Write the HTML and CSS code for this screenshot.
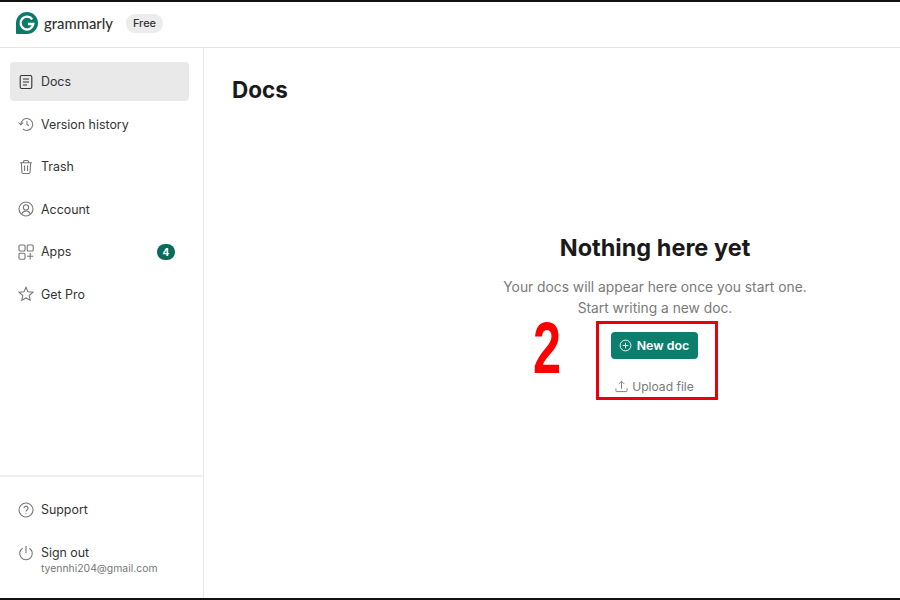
FILE: index.html
```html
<!DOCTYPE html>
<html lang="en">
<head>
<meta charset="utf-8">
<title>Grammarly Docs</title>
<link rel="stylesheet" href="styles.css">
</head>
<body>
<div class="app">
  <header class="topbar">
    <svg class="logo" viewBox="0 0 22 22" width="22" height="22" aria-hidden="true">
      <path d="M11 0a11 11 0 1 1 0 22H1.200a1 1 0 0 1-1.200-1V11A11 11 0 0 1 11 0z" fill="#0b7a67"/>
      <path d="M16.200 7.400A6.400 6.400 0 1 0 17.300 12h-5.400" fill="none" stroke="#fff" stroke-width="2.300"/>
    </svg>
    <span class="brand">grammarly</span>
    <span class="plan">Free</span>
  </header>
  <div class="body">
    <aside class="sidebar">
      <nav class="nav">
        <a class="item active">
          <svg class="icon dark" viewBox="0 0 16 16"><rect x="2.200" y="1.500" width="11.600" height="13" rx="1.500"/><path d="M5 5h6M5 8h6M5 11h4"/></svg>
          <span>Docs</span>
        </a>
        <a class="item">
          <svg class="icon" viewBox="0 0 17 16"><path d="M3 8.500a6.300 6.300 0 1 1 2.100 4.700"/><path d="M.6 6.400l2.400 2.400 2.500-2.300M9.500 4.800v3.600l2.300 1.400"/></svg>
          <span>Version history</span>
        </a>
        <a class="item">
          <svg class="icon" viewBox="0 0 16 16"><path d="M2 3.800h12M5.500 3.600V2.800a1.300 1.300 0 0 1 1.300-1.300h2.400a1.300 1.300 0 0 1 1.300 1.300v.8M3.400 3.800l.5 9.500a1.300 1.300 0 0 0 1.300 1.200h5.600a1.300 1.300 0 0 0 1.300-1.200l.5-9.500M6.500 6.500v5.500M9.500 6.500v5.500"/></svg>
          <span>Trash</span>
        </a>
        <a class="item">
          <svg class="icon" viewBox="0 0 16 16"><circle cx="8" cy="8" r="7"/><circle cx="8" cy="6.400" r="2.600"/><path d="M3.600 13c.8-2 2.400-3 4.400-3s3.600 1 4.400 3"/></svg>
          <span>Account</span>
        </a>
        <a class="item">
          <svg class="icon" viewBox="0 0 16 16"><rect x="1" y="1" width="6" height="6" rx="1"/><rect x="9.200" y="1" width="6" height="6" rx="1"/><rect x="1" y="9.200" width="6" height="6" rx="1"/><path d="M12.200 9v6.400M9 12.200h6.400"/></svg>
          <span>Apps</span>
          <span class="badge">4</span>
        </a>
        <a class="item">
          <svg class="icon" viewBox="0 0 16 16"><path d="M8 1.300l2 4.500 4.800.5-3.600 3.200 1 4.800L8 12l-4.200 2.300 1-4.800L1.200 6.300 6 5.800z"/></svg>
          <span>Get Pro</span>
        </a>
      </nav>
      <div class="footer">
        <a class="item">
          <svg class="icon" viewBox="0 0 16 16"><circle cx="8" cy="8" r="7"/><path d="M6 6.200a2 2 0 1 1 3 1.700c-.7.400-1 .8-1 1.600M8 11.300v.8"/></svg>
          <span>Support</span>
        </a>
        <a class="item signout">
          <svg class="icon" viewBox="0 0 16 16"><path d="M8 1v7M4.600 3.200a6.300 6.300 0 1 0 6.800 0"/></svg>
          <span class="stack"><span>Sign out</span><small class="email">tyennhi204@gmail.com</small></span>
        </a>
      </div>
    </aside>
    <main class="main">
      <h1 class="title">Docs</h1>
      <section class="empty">
        <h2 class="empty-title">Nothing here yet</h2>
        <p class="empty-text">Your docs will appear here once you start one.<br>Start writing a new doc.</p>
        <div class="actions">
          <span class="step">2</span>
          <div class="highlight">
            <button class="new-doc">
              <svg class="btn-icon" viewBox="0 0 14 14"><circle cx="7" cy="7" r="5.800"/><path d="M7 4v6M4 7h6"/></svg>
              New doc
            </button>
            <a class="upload">
              <svg class="up-icon" viewBox="0 0 14 14"><path d="M7 9.500V1.500M4 4.300l3-3 3 3M1 9v2.700c0 .5.400.8.800.8h10.400c.4 0 .8-.3.800-.8V9"/></svg>
              Upload file
            </a>
          </div>
        </div>
      </section>
    </main>
  </div>
</div>
</body>
</html>
```
FILE: styles.css
```css
* { box-sizing: border-box; }
html, body { margin: 0; height: 100%; }
body { background: #fff; font-family: Inter, "Liberation Sans", sans-serif; color: #2b2b2b; }
.app {
  width: 900px; height: 600px; display: flex; flex-direction: column;
  border-top: 2px solid #111; border-bottom: 2px solid #111;
}
.topbar {
  height: 46px; flex: none; display: flex; align-items: center;
  padding: 0 0 3px 16px; border-bottom: 1px solid #e6e6e6;
}
.logo { flex: none; }
.brand { margin-left: 6px; margin-top: -1px; font-family: Lato, Inter, sans-serif; font-size: 14.800px; font-weight: 500; color: #333; }
.plan {
  margin-left: 13.500px; padding: 0 6.500px; height: 19px; line-height: 19px; border-radius: 9px;
  background: #ececec; font-size: 11px; font-weight: 500; color: #333;
}
.body { flex: 1; display: flex; min-height: 0; }
.sidebar {
  width: 204px; flex: none; border-right: 1px solid #e6e6e6;
  display: flex; flex-direction: column; justify-content: space-between;
}
.nav { padding: 14px 14px 0 10px; display: flex; flex-direction: column; gap: 3.500px; }
.item {
  height: 39px; display: flex; align-items: center; gap: 7px;
  padding: 0 14px 0 8px; border-radius: 4px; font-size: 12.400px; color: #333;
}
.active { background: #e9e9e9; }
.icon {
  width: 16px; height: 16px; flex: none; fill: none; stroke: #777; stroke-width: 1.100;
}
.icon.dark { stroke: #333; }
.badge {
  margin-left: auto; width: 18px; height: 16px; border-radius: 8px; background: #0b6b5b;
  color: #fff; font-size: 10px; font-weight: 700; display: flex; align-items: center; justify-content: center;
}
.footer {
  border-top: 2px solid #efefef; padding: 13px 14px 16px 10px;
  display: flex; flex-direction: column; gap: 7px;
}
.signout { align-items: flex-start; padding-top: 9px; height: 46px; }
.stack { display: flex; flex-direction: column; gap: 2px; }
.email { font-size: 10.400px; color: #777; }
.main { flex: 1; padding: 27px 0 0 28px; min-width: 0; }
.title { margin: 0; font-size: 22.500px; line-height: 30px; font-weight: 700; color: #1a1a1a; }
.empty { margin: 128px 0 0 248px; width: 350px; display: flex; flex-direction: column; align-items: center; }
.empty-title { margin: 0; font-size: 23.500px; line-height: 30px; font-weight: 700; color: #1a1a1a; }
.empty-text { margin: 14px 0 0; font-size: 13.800px; line-height: 21px; color: #7a7a7a; text-align: center; }
.actions { display: flex; align-items: flex-start; margin-left: -58px; margin-top: 2px; }
.step {
  width: 62px; margin-left: -1px; margin-right: 1px; font-family: "Liberation Sans", sans-serif; font-size: 72px; line-height: 54px;
  font-weight: 700; color: #f00; text-align: left; transform: scaleX(.7); transform-origin: left center;
}
.highlight {
  width: 122px; height: 79px; border: 3px solid #e8000c;
  display: flex; flex-direction: column; align-items: center; padding: 8px 6px 0 0;
}
.new-doc {
  width: 87px; height: 27px; border: 0; border-radius: 4px; background: #0b7f6c; color: #fff;
  font: 600 12.400px Inter, sans-serif; display: flex; align-items: center; justify-content: center; gap: 5px; padding: 0;
}
.btn-icon { width: 13px; height: 13px; fill: none; stroke: #fff; stroke-width: 1; }
.upload { margin-top: 20px; margin-left: 1px; display: flex; align-items: center; gap: 4px; font-size: 12.100px; color: #7a7a7a; }
.up-icon { width: 13px; height: 13px; fill: none; stroke: #777; stroke-width: 1; }
```
